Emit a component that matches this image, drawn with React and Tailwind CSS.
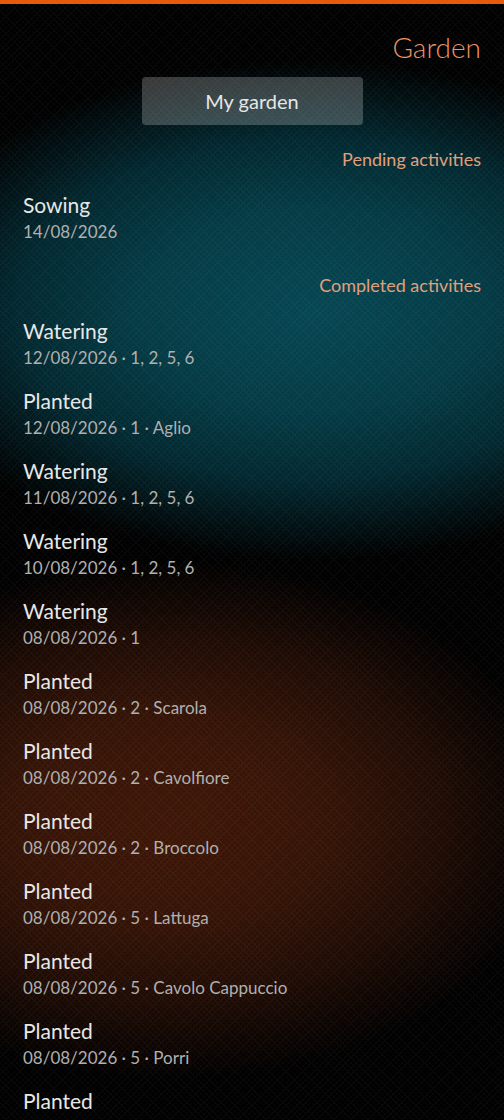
const pending = [{ title: 'Sowing', sub: '14/08/2026' }];

const completed = [
  { title: 'Watering', sub: '12/08/2026 · 1, 2, 5, 6' },
  { title: 'Planted', sub: '12/08/2026 · 1 · Aglio' },
  { title: 'Watering', sub: '11/08/2026 · 1, 2, 5, 6' },
  { title: 'Watering', sub: '10/08/2026 · 1, 2, 5, 6' },
  { title: 'Watering', sub: '08/08/2026 · 1' },
  { title: 'Planted', sub: '08/08/2026 · 2 · Scarola' },
  { title: 'Planted', sub: '08/08/2026 · 2 · Cavolfiore' },
  { title: 'Planted', sub: '08/08/2026 · 2 · Broccolo' },
  { title: 'Planted', sub: '08/08/2026 · 5 · Lattuga' },
  { title: 'Planted', sub: '08/08/2026 · 5 · Cavolo Cappuccio' },
  { title: 'Planted', sub: '08/08/2026 · 5 · Porri' },
  { title: 'Planted', sub: '08/08/2026 · 5 · Sedano' },
];

function SectionHeader({ children }) {
  return (
    <div className="h-[56px] flex items-center justify-end px-[23px] text-[18px] text-[#e0a07c]">
      {children}
    </div>
  );
}

function ActivityItem({ title, sub }) {
  return (
    <div className="h-[70px] flex flex-col pt-[4px] px-[23px]">
      <span className="text-[21px] leading-[27px] text-[#e8e8e8]">{title}</span>
      <span className="text-[17px] leading-[27px] text-[#b0b0b0]">{sub}</span>
    </div>
  );
}

export default function App() {
  return (
    <div
      className="relative w-full h-[1120px] overflow-hidden bg-black bg-[radial-gradient(ellipse_430px_250px_at_310px_310px,#054652_0%,#043b45_40%,#022830_68%,rgba(0,0,0,0)_100%),radial-gradient(ellipse_390px_260px_at_170px_820px,#3e1607_0%,#341306_40%,#1e0b04_70%,rgba(0,0,0,0)_100%)]"
      style={{ fontFamily: 'Lato, "Noto Sans", sans-serif' }}
    >
      <div className="absolute inset-0 opacity-[0.03] bg-[repeating-linear-gradient(45deg,#fff_0px,#fff_1px,transparent_1px,transparent_4px),repeating-linear-gradient(-45deg,#fff_0px,#fff_1px,transparent_1px,transparent_4px)]" />
      <div className="relative">
        <div className="h-[4px] bg-[#e65a0a]" />
        <div className="h-[73px] flex items-center justify-end px-[23px] pt-[12px] text-[28px] font-light text-[#ea9466]">
          Garden
        </div>
        <div className="flex justify-center">
          <div className="w-[221px] h-[48px] rounded-[4px] bg-[rgba(255,255,255,0.22)] flex items-center justify-center text-[20px] text-[#e6e6e6]">
            My garden
          </div>
        </div>
        <div className="pt-[6px]">
          <SectionHeader>Pending activities</SectionHeader>
        </div>
        {pending.map((a, i) => (
          <ActivityItem key={i} {...a} />
        ))}
        <SectionHeader>Completed activities</SectionHeader>
        {completed.map((a, i) => (
          <ActivityItem key={i} {...a} />
        ))}
      </div>
    </div>
  );
}
